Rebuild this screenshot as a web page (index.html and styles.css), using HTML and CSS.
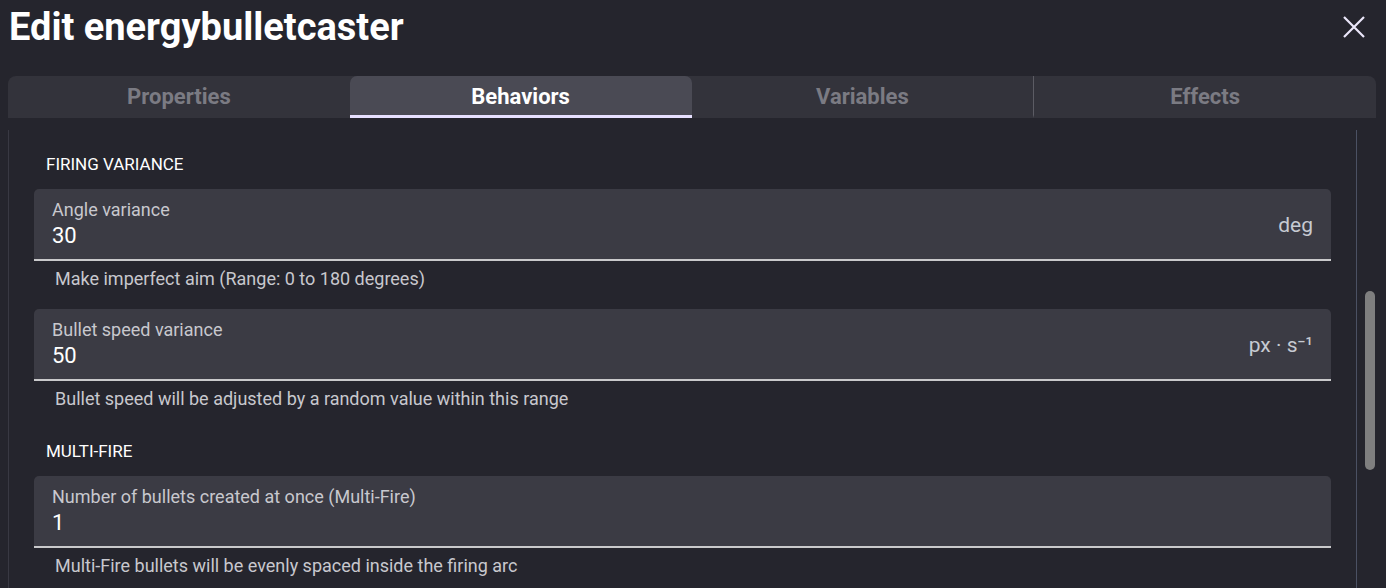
FILE: index.html
```html
<!DOCTYPE html>
<html>
    <head>
        <meta charset="utf-8">
        <title>Edit energybulletcaster</title>
        <link rel="stylesheet" href="styles.css">
    </head>
    <body>
        <div class="dialog">
            <div class="head">
                <h1>Edit energybulletcaster</h1>
                <button class="close" title="Close">
                    <svg width="22" height="22" viewBox="0 0 22 22"><path d="M1 1L21 21M21 1L1 21" stroke="#ebe7fa" stroke-width="2.2" fill="none"/></svg>
                </button>
            </div>

            <div class="tabs">
                <div class="tab">Properties</div>
                <div class="tab active">Behaviors</div>
                <div class="tab">Variables</div>
                <div class="tab sep">Effects</div>
            </div>

            <div class="body">
                <div class="panel">
                    <div class="group">
                        <h2>Firing variance</h2>
                        <div class="field">
                            <div class="box">
                                <div class="main">
                                    <div class="label">Angle variance</div>
                                    <div class="value">30</div>
                                </div>
                                <span class="unit">deg</span>
                            </div>
                            <p class="help">Make imperfect aim (Range: 0 to 180 degrees)</p>
                        </div>
                        <div class="field">
                            <div class="box">
                                <div class="main">
                                    <div class="label">Bullet speed variance</div>
                                    <div class="value">50</div>
                                </div>
                                <span class="unit">px · s⁻¹</span>
                            </div>
                            <p class="help">Bullet speed will be adjusted by a random value within this range</p>
                        </div>
                    </div>
                    <div class="group">
                        <h2>Multi-Fire</h2>
                        <div class="field">
                            <div class="box">
                                <div class="main">
                                    <div class="label">Number of bullets created at once (Multi-Fire)</div>
                                    <div class="value">1</div>
                                </div>
                            </div>
                            <p class="help">Multi-Fire bullets will be evenly spaced inside the firing arc</p>
                        </div>
                    </div>
                </div>
                <div class="scrollbar"><div class="thumb"></div></div>
            </div>
        </div>
    </body>
</html>
```

FILE: styles.css
```css
html, body {
    height: 100%;
}
body {
    background-color: #25252d;
    margin: 0;
    font-family: Roboto, "Noto Sans", Arial, sans-serif;
    color: #fff;
    overflow: hidden;
}

.dialog {
    padding: 0 10px 0 8px;
    height: 100%;
    display: flex;
    flex-direction: column;
    box-sizing: border-box;
}

.head {
    height: 76px;
    display: flex;
    justify-content: space-between;
    align-items: flex-start;
}
.head h1 {
    margin: 4px 0 0 1px;
    font-size: 38px;
    line-height: 46px;
    font-weight: bold;
}
.close {
    background: none;
    border: 0;
    padding: 0;
    margin: 16px 11px 0 0;
    width: 22px;
    height: 22px;
    cursor: pointer;
}
.close svg {
    display: block;
}

.tabs {
    display: flex;
    background-color: #33333b;
    border-radius: 8px 8px 0 0;
    height: 42px;
}
.tab {
    flex: 1;
    display: flex;
    align-items: center;
    justify-content: center;
    box-sizing: border-box;
    padding-top: 2px;
    border-bottom: 3px solid transparent;
    font-size: 22px;
    font-weight: bold;
    color: #7b7b83;
}
.tab.active {
    background-color: #4a4a54;
    border-bottom-color: #e7e0ff;
    border-radius: 7px 7px 0 0;
    color: #fff;
}
.tab.sep {
    border-left: 1px solid #5c5c64;
}

.body {
    flex: 1;
    display: flex;
    margin-top: 12px;
    min-height: 0;
}
.panel {
    flex: 1;
    border-left: 1px solid #393943;
    border-right: 1px solid #4b5163;
    padding: 24px 25px 0 25px;
}
.scrollbar {
    width: 19px;
    padding-left: 8px;
    box-sizing: border-box;
}
.thumb {
    width: 10px;
    height: 179px;
    margin-top: 161px;
    border-radius: 5px;
    background-color: #7f7f7f;
}

/* help margin collapses into this one */
.group + .group {
    margin-top: 32px;
}
.group h2 {
    margin: 0 0 15px 12px;
    font-size: 17px;
    line-height: 20px;
    font-weight: normal;
    text-transform: uppercase;
}

.box {
    display: flex;
    align-items: center;
    background-color: #3b3b44;
    border-radius: 5px 5px 0 0;
    border-bottom: 2px solid #c9c9cb;
    padding: 10px 18px 8px 18px;
}
.main {
    flex: 1;
}
.label {
    font-size: 18px;
    line-height: 22px;
    color: #c8c8ce;
}
.value {
    font-size: 22px;
    line-height: 30px;
    color: #fff;
}
.unit {
    font-size: 21px;
    color: #c6cad2;
}

.help {
    margin: 8px 0 20px 21px;
    font-size: 18px;
    line-height: 20px;
    color: #c8c8ce;
}
```
